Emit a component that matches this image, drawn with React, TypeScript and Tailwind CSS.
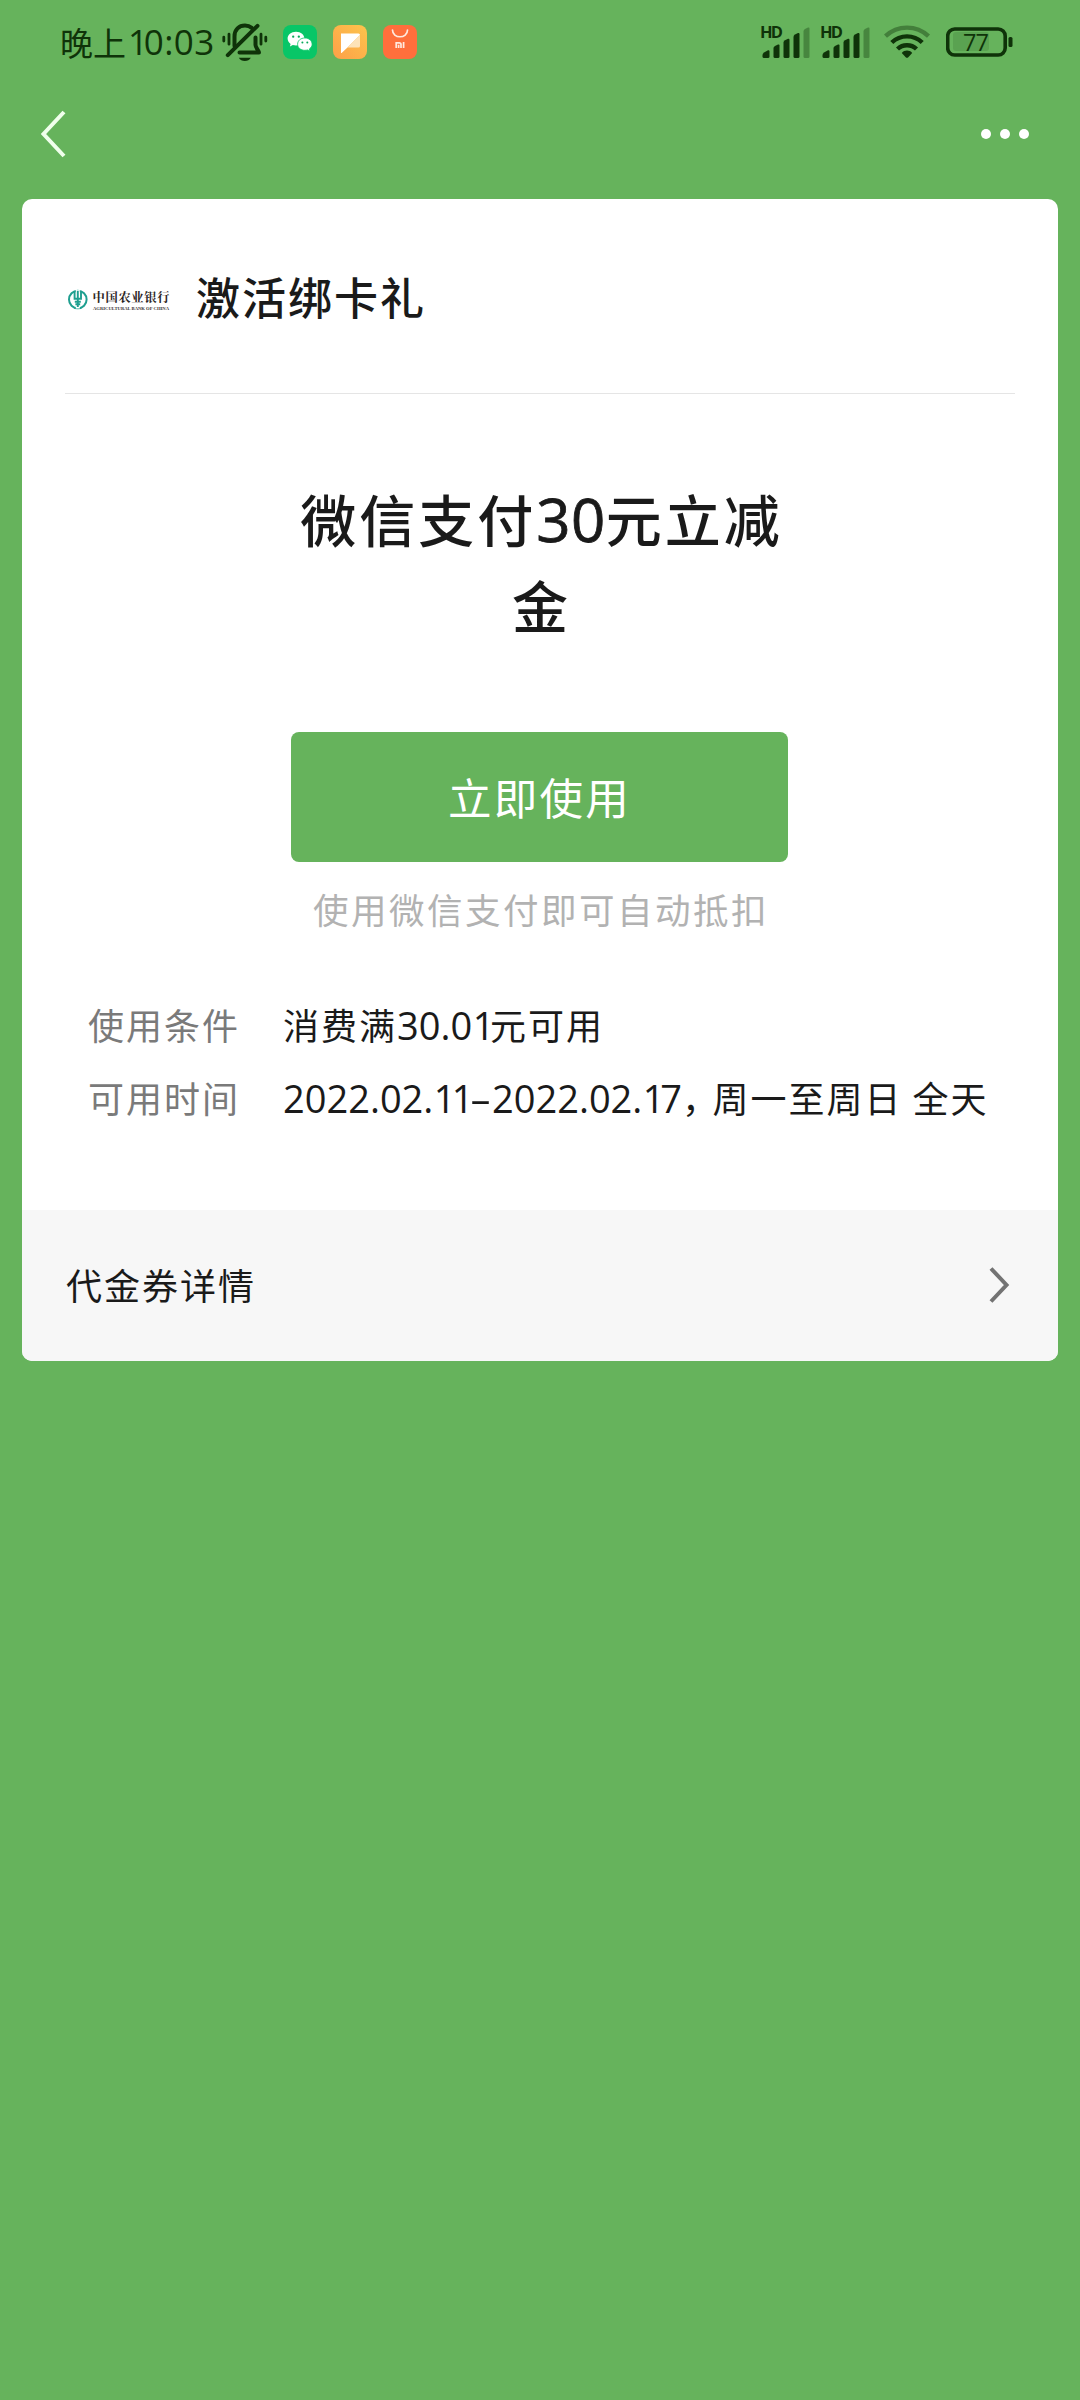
import React from "react";

const INK = "#0f3309";

function Num({ children, className = "" }: { children: React.ReactNode; className?: string }) {
  return <span className={`font-['Open_Sans','Noto_Sans',sans-serif] ${className}`}>{children}</span>;
}

/* The digit 1 is set narrower than the other figures. */
function One() {
  return <span className="ml-[0.500px] tracking-[-4.400px]">1</span>;
}

function MutedBell() {
  return (
    <svg className="ml-[9px] mt-[22px]" width="46" height="40" viewBox="0 0 46 40" fill="none" stroke={INK} strokeWidth="4" strokeLinecap="round" strokeLinejoin="round">
      <path d="M12.5 24 V14.5 C12.5 7.5 17 3.6 23 3.6 C25.6 3.6 28 4.4 29.8 5.8" />
      <path d="M33.500 15.500 V23 C33.500 25.500 37 29 37 30.600 H17.500" />
      <path d="M35.500 3.800 L5.800 33.200" />
      <path d="M16.8 35.800 H28.8 C27.5 38.2 25.5 39 22.8 39 C20.2 39 18.1 38.2 16.8 35.800Z" fill={INK} stroke="none" />
      <path d="M7 12.2 V22.2 M1.8 15.2 V19 M39 12.2 V22.2 M43.8 15.2 V19" strokeWidth="2.8" />
    </svg>
  );
}

function WeChatIcon() {
  return (
    <svg width="34" height="34" viewBox="0 0 34 34">
      <rect width="34" height="34" rx="8" fill="#08c667" />
      <path d="M13 6.8 C8 6.8 4.6 9.8 4.6 13.6 C4.6 15.9 5.8 17.6 7.6 18.9 L6.9 21.4 L9.8 19.9 C10.8 20.2 11.9 20.4 13 20.4 C18 20.4 21.4 17.4 21.4 13.6 C21.4 9.8 18 6.8 13 6.8Z" fill="#fff" />
      <path d="M21.8 13 C17.6 13 14.6 15.7 14.6 19.2 C14.6 22.6 17.6 25.3 21.8 25.3 C22.8 25.3 23.7 25.1 24.5 24.9 L26.9 26.2 L26.3 24 C28 22.900 29.100 21.200 29.100 19.200 C29.100 15.700 26 13 21.800 13Z" fill="#fff" stroke="#08c667" strokeWidth=".8" />
      <g fill="#08a95a">
        <circle cx="10.200" cy="11.700" r="1.150" />
        <circle cx="15.800" cy="11.700" r="1.150" />
        <circle cx="19.400" cy="17.400" r="1" />
        <circle cx="24.300" cy="17.400" r="1" />
      </g>
    </svg>
  );
}

function NoteIcon() {
  return (
    <svg width="34" height="34" viewBox="0 0 34 34">
      <defs>
        <linearGradient id="note" x1="1" y1="0" x2="0" y2="1">
          <stop offset="0" stopColor="#fcc44c" />
          <stop offset="1" stopColor="#fda048" />
        </linearGradient>
      </defs>
      <rect width="34" height="34" rx="8" fill="url(#note)" />
      <path d="M8 8.500 H25.500 Q27 8.500 27 10 L15 22 L8.600 28 Q8 28.200 8 27.500Z" fill="#fff" />
      <path d="M27 10 V21 Q27 22.500 25.500 22.500 H14.500Z" fill="#fde3b8" />
    </svg>
  );
}

function MiStoreIcon() {
  return (
    <svg width="34" height="34" viewBox="0 0 34 34" fill="none" stroke="#ffe9df" strokeWidth="1.700">
      <rect width="34" height="34" rx="8" fill="#ff6f3c" stroke="none" />
      <path d="M9.500 5 C9.500 14 24.500 14 24.500 5" strokeLinecap="round" />
      <path d="M13.200 23 V17.900 H16.300 Q18 17.900 18 19.600 V23 M15.600 19.800 V23 M20.600 17.100 V23" />
    </svg>
  );
}

function Signal() {
  return (
    <svg width="60" height="46" viewBox="0 -10 60 46" fill={INK}>
      <text x="0" y="14" fontSize="16.500" fontWeight="700" textLength="23" fontFamily="Open Sans, sans-serif">HD</text>
      <path d="M2.500 31 Q2.500 29.500 4 28.500 L8 26.300 Q9.500 25.800 9.500 27.500 V32.500 Q9.500 34 8 34 H4 Q2.500 34 2.500 32.500Z" />
      <path d="M13.500 24 Q13.500 22.800 15 22 L18 20.500 Q19.500 20 19.500 21.500 V32.500 Q19.500 34 18 34 H15 Q13.500 34 13.500 32.500Z" />
      <path d="M23.500 18.500 Q23.500 17 25 16.200 L28 14.800 Q29.500 14.400 29.500 16 V32.500 Q29.500 34 28 34 H25 Q23.500 34 23.500 32.500Z" />
      <path d="M33.500 13 Q33.500 11.500 35 10.600 L38 9.100 Q39.500 8.600 39.500 10.200 V32.500 Q39.500 34 38 34 H35 Q33.500 34 33.500 32.500Z" />
      <path d="M43.500 7.500 Q43.500 6 45 5.100 L48 3.600 Q49.500 3.100 49.500 4.700 V32.500 Q49.500 34 48 34 H45 Q43.500 34 43.500 32.500Z" opacity=".35" />
    </svg>
  );
}

function Wifi() {
  return (
    <svg width="46" height="36" viewBox="0 0 46 36" fill="none" stroke={INK} strokeWidth="4.400">
      <path d="M1.500 12.200 C13.500 .8 32.500 .8 44.500 12.200" opacity=".4" />
      <path d="M7.800 18.500 C16.300 10.300 29.700 10.300 38.200 18.500" />
      <path d="M13.500 25 C18.800 19.900 27.200 19.900 32.500 25" />
      <path d="M17.800 29 C20.600 25.800 25.400 25.800 28.200 29 L24.300 33.200 Q23 34.400 21.700 33.200Z" fill={INK} stroke="none" />
    </svg>
  );
}

function Battery() {
  return (
    <svg width="68" height="36" viewBox="0 0 68 36">
      <rect x="7" y="8" width="36" height="19" rx="3" fill={INK} opacity=".13" />
      <rect x="1.700" y="5" width="57.500" height="26" rx="7" fill="none" stroke={INK} strokeWidth="3.600" />
      <rect x="62.500" y="13" width="4" height="10" rx="1.500" fill={INK} />
      <text x="17" y="26.500" fontSize="23.500" textLength="26" fontFamily="Open Sans, sans-serif" fill={INK}>77</text>
    </svg>
  );
}

function BankLogo() {
  return (
    <svg className="mt-[5px] shrink-0" width="112" height="48" viewBox="0 -4 112 48">
      <g fill="none" stroke="#1f9f90">
        <circle cx="12.800" cy="20.500" r="8.800" strokeWidth="2" />
        <path d="M12.800 11 V13.500 M12.800 27 V29.500" stroke="#fff" strokeWidth="4" />
        <path d="M9.600 12.500 V19.800 H16 V12.500 M12.800 11.800 V28 M9.800 22.800 H15.800 M10.400 25.300 H15.200" strokeWidth="1.900" />
      </g>
      <text x="27.500" y="22.500" fontSize="12.300" fontWeight="700" textLength="77" fontFamily="Noto Serif CJK SC, Noto Sans CJK SC, serif" fill="#2a2424">中国农业银行</text>
      <text x="28" y="30.500" fontSize="5" fontWeight="700" textLength="76" lengthAdjust="spacingAndGlyphs" fontFamily="Liberation Serif, serif" fill="#3a3434">AGRICULTURAL BANK OF CHINA</text>
    </svg>
  );
}

export default function App() {
  return (
    <div className="h-[2400px] w-[1080px] overflow-hidden bg-[#66b35c] font-['Noto_Sans_CJK_SC',sans-serif] text-[#1a1a1a]">
      <header className="flex h-[70px] items-start">
        <div className="ml-[60px] flex h-[85px] w-[153px] items-center whitespace-nowrap text-[33px] text-[#0f3309]">
          晚上<Num className="pl-[1.500px] text-[35px] tracking-[0.500px]"><One />0:03</Num>
        </div>
        <MutedBell />
        <div className="ml-[15px] mt-[25px] flex gap-4">
          <WeChatIcon />
          <NoteIcon />
          <MiStoreIcon />
        </div>
        <div className="ml-auto mr-[66px] mt-[14px] flex items-end">
          <Signal />
          <Signal />
          <div className="ml-[4px] mr-4"><Wifi /></div>
          <Battery />
        </div>
      </header>

      <nav className="flex h-[129px] items-center justify-between pb-px pl-10 pr-[51px]">
        <svg width="28" height="50" viewBox="0 0 28 50" fill="none" stroke="#f0ffec" strokeWidth="4">
          <path d="M24 3 L3.500 25 L24 47" />
        </svg>
        <div className="flex gap-[9px]">
          <i className="size-[10px] rounded-full bg-white" />
          <i className="size-[10px] rounded-full bg-white" />
          <i className="size-[10px] rounded-full bg-white" />
        </div>
      </nav>

      <main className="mx-[22px] h-[1162px] overflow-hidden rounded-[10px] bg-white">
        <div className="mx-[43px] flex h-[195px] items-center border-b border-[#e5e5e5]">
          <BankLogo />
          <h1 className="ml-[19px] text-[44px] font-medium leading-none tracking-[2px]">激活绑卡礼</h1>
        </div>

        <h2 className="mt-[81px] pl-[3px] text-center text-[56px] font-medium leading-[86px] tracking-[3px]">
          微信支付<Num className="text-[60px] leading-none tracking-[0.500px] [-webkit-text-stroke:0.800px_#1a1a1a]">30</Num>元立减
          <br />金
        </h2>

        <button className="ml-[269px] mt-[85px] flex h-[130px] w-[497px] items-center justify-center rounded-lg bg-[#66b35c] text-[43.500px] leading-none tracking-[2.200px] text-white">
          立即使用
        </button>
        <p className="mt-[22px] pl-[2px] text-center text-[35.500px] leading-[50px] tracking-[2.500px] text-[#b2b2b2]">使用微信支付即可自动抵扣</p>

        <dl className="mt-[54px] grid grid-cols-[195px_1fr] whitespace-nowrap pl-[66px] text-[36px] leading-[73px] tracking-[2px]">
          <dt className="text-[#7a7a7a]">使用条件</dt>
          <dd>消费满<Num className="text-[38px] leading-none tracking-normal">30.0<One /></Num>元可用</dd>
          <dt className="text-[#7a7a7a]">可用时间</dt>
          <dd>
            <Num className="text-[38px] leading-none tracking-normal">2022.02.<One /><One /><span className="inline-block w-[23px] scale-x-[1.800] text-center">-</span>2022.02.<One />7</Num>
            <span className="tracking-[-5.500px]">，</span>周一至周日 全天
          </dd>
        </dl>

        <div className="mt-[76px] flex h-[151px] items-center justify-between bg-[#f7f7f7] pb-[3px] pl-[44px] pr-[48px] text-[36px] leading-none tracking-[2px]">
          <span>代金券详情</span>
          <svg className="mt-0.5" width="22" height="38" viewBox="0 0 22 38" fill="none" stroke="#737373" strokeWidth="4">
            <path d="M3 2.500 L18.500 19 L3 35.500" />
          </svg>
        </div>
      </main>
    </div>
  );
}
